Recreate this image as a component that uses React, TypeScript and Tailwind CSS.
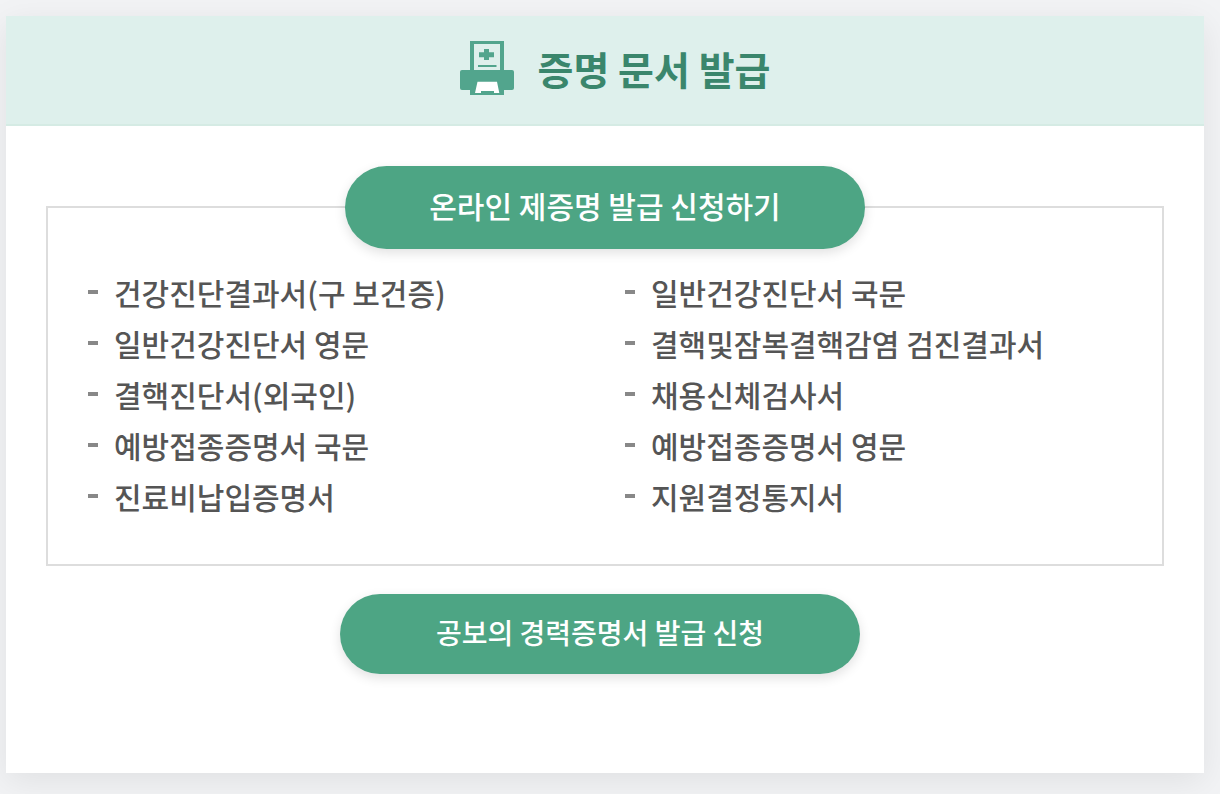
const leftDocs = [
  "건강진단결과서(구 보건증)",
  "일반건강진단서 영문",
  "결핵진단서(외국인)",
  "예방접종증명서 국문",
  "진료비납입증명서",
];

const rightDocs = [
  "일반건강진단서 국문",
  "결핵및잠복결핵감염 검진결과서",
  "채용신체검사서",
  "예방접종증명서 영문",
  "지원결정통지서",
];

function PrinterIcon() {
  return (
    <svg width="54" height="54" viewBox="0 0 54 54" aria-hidden="true">
      <path d="M10 0h34v30H10z" fill="#52a58d" />
      <path d="M14 3h26v27H14z" fill="#def0ec" />
      <path d="M24 8h5v3.300h5v5h-5V19h-5v-2.700h-5v-5h5z" fill="#52a58d" />
      <path d="M18 24h18.500v2H18z" fill="#52a58d" />
      <rect y="29" width="54" height="20" rx="2" fill="#52a58d" />
      <path d="M10 46h34v8H10z" fill="#52a58d" />
      <path d="M17.500 40.700h19.500l2.300 11.300h-5.300v-2H21v2h-6z" fill="#fff" />
    </svg>
  );
}

function DocList({ items }: { items: string[] }) {
  return (
    <ul>
      {items.map((item) => (
        <li key={item} className="flex items-center gap-4 text-[30px] leading-[51px] font-medium text-[#555]">
          <span className="mb-0.5 h-1 w-2.5 shrink-0 bg-[#888]" />
          {item}
        </li>
      ))}
    </ul>
  );
}

export default function App() {
  return (
    <div className="min-h-screen bg-[#f2f3f5] pt-4 pr-4 pb-5 pl-1.5 font-['Noto_Sans_CJK_KR','Noto_Sans',sans-serif]">
      <section className="bg-white pb-[99px] shadow-[0_8px_32px_rgba(0,0,0,0.08)]">
        <header className="flex h-[110px] items-center justify-center gap-6 border-b-2 border-[#d5ebe4] bg-[#def0ec] pb-1 pl-5">
          <PrinterIcon />
          <h2 className="text-[39px] leading-[56px] font-bold text-[#3a866c]">증명 문서 발급</h2>
        </header>

        <div className="mx-10 mt-20 border-2 border-[#ddd] pb-[42px]">
          <div className="-mt-[42px] flex justify-center">
            <button
              type="button"
              className="h-[83px] w-[520px] rounded-full bg-[#4da584] pb-1 text-[30px] font-medium text-white shadow-[0_4px_12px_rgba(0,0,0,0.12)]"
            >
              온라인 제증명 발급 신청하기
            </button>
          </div>
          <div className="mt-[18px] grid grid-cols-2 pl-10">
            <DocList items={leftDocs} />
            <DocList items={rightDocs} />
          </div>
        </div>

        <div className="mt-7 flex justify-center pr-2.5">
          <button
            type="button"
            className="h-20 w-[520px] rounded-full bg-[#4da584] pb-1 text-[28px] font-medium text-white shadow-[0_4px_12px_rgba(0,0,0,0.12)]"
          >
            공보의 경력증명서 발급 신청
          </button>
        </div>
      </section>
    </div>
  );
}
